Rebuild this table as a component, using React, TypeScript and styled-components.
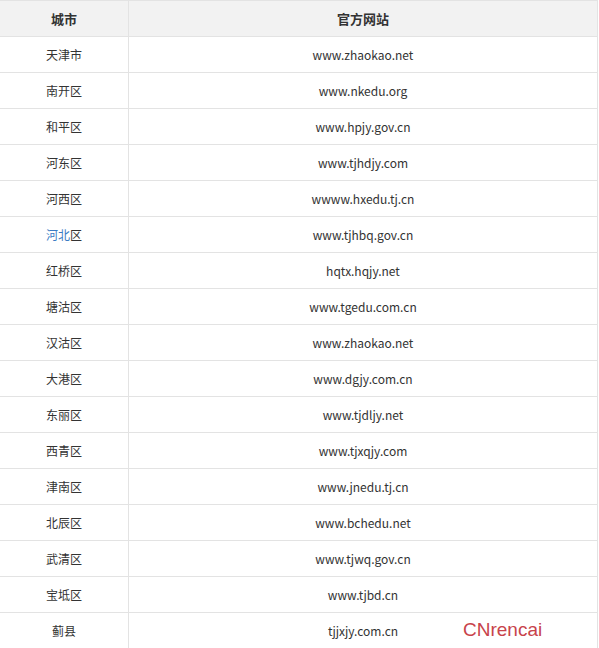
import React from "react";
import styled, { createGlobalStyle } from "styled-components";

const Global = createGlobalStyle`
  html, body { margin: 0; padding: 0; background: #fff; }
  body { font-family: "Microsoft YaHei", "Noto Sans CJK SC", "Noto Sans", sans-serif; }
`;

const Wrap = styled.div`
  position: relative;
  width: 598px;
`;

const Table = styled.table`
  width: 598px;
  border-collapse: collapse;
  table-layout: fixed;
`;

const Th = styled.th<{ $w?: number }>`
  height: 35px;
  padding: 0;
  background: #f2f2f2;
  border: 1px solid #e3e3e3;
  border-left: none;
  font-size: 13px;
  font-weight: bold;
  color: #333;
  text-align: center;
  ${(p) => (p.$w ? `width: ${p.$w}px;` : "")}
`;

const Td = styled.td<{ $first?: boolean }>`
  height: 35px;
  padding: 0;
  border: 1px solid #e3e3e3;
  border-left: none;
  font-size: 12px;
  color: #333;
  text-align: center;
`;

const CityLink = styled.span`
  color: #3b7bc3;
`;

const Watermark = styled.div`
  position: absolute;
  left: 463px;
  top: 619px;
  font-family: "Liberation Sans", Arial, sans-serif;
  font-size: 19px;
  color: #c8434b;
`;

const rows: [React.ReactNode, string][] = [
  ["天津市", "www.zhaokao.net"],
  ["南开区", "www.nkedu.org"],
  ["和平区", "www.hpjy.gov.cn"],
  ["河东区", "www.tjhdjy.com"],
  ["河西区", "wwww.hxedu.tj.cn"],
  [
    <>
      <CityLink>河北</CityLink>区
    </>,
    "www.tjhbq.gov.cn",
  ],
  ["红桥区", "hqtx.hqjy.net"],
  ["塘沽区", "www.tgedu.com.cn"],
  ["汉沽区", "www.zhaokao.net"],
  ["大港区", "www.dgjy.com.cn"],
  ["东丽区", "www.tjdljy.net"],
  ["西青区", "www.tjxqjy.com"],
  ["津南区", "www.jnedu.tj.cn"],
  ["北辰区", "www.bchedu.net"],
  ["武清区", "www.tjwq.gov.cn"],
  ["宝坻区", "www.tjbd.cn"],
  ["蓟县", "tjjxjy.com.cn"],
];

export default function App() {
  return (
    <>
      <Global />
      <Wrap>
        <Table>
          <thead>
            <tr>
              <Th $w={128}>城市</Th>
              <Th>官方网站</Th>
            </tr>
          </thead>
          <tbody>
            {rows.map(([c, u], i) => (
              <tr key={i}>
                <Td>{c}</Td>
                <Td>{u}</Td>
              </tr>
            ))}
          </tbody>
        </Table>
        <Watermark>CNrencai</Watermark>
      </Wrap>
    </>
  );
}
